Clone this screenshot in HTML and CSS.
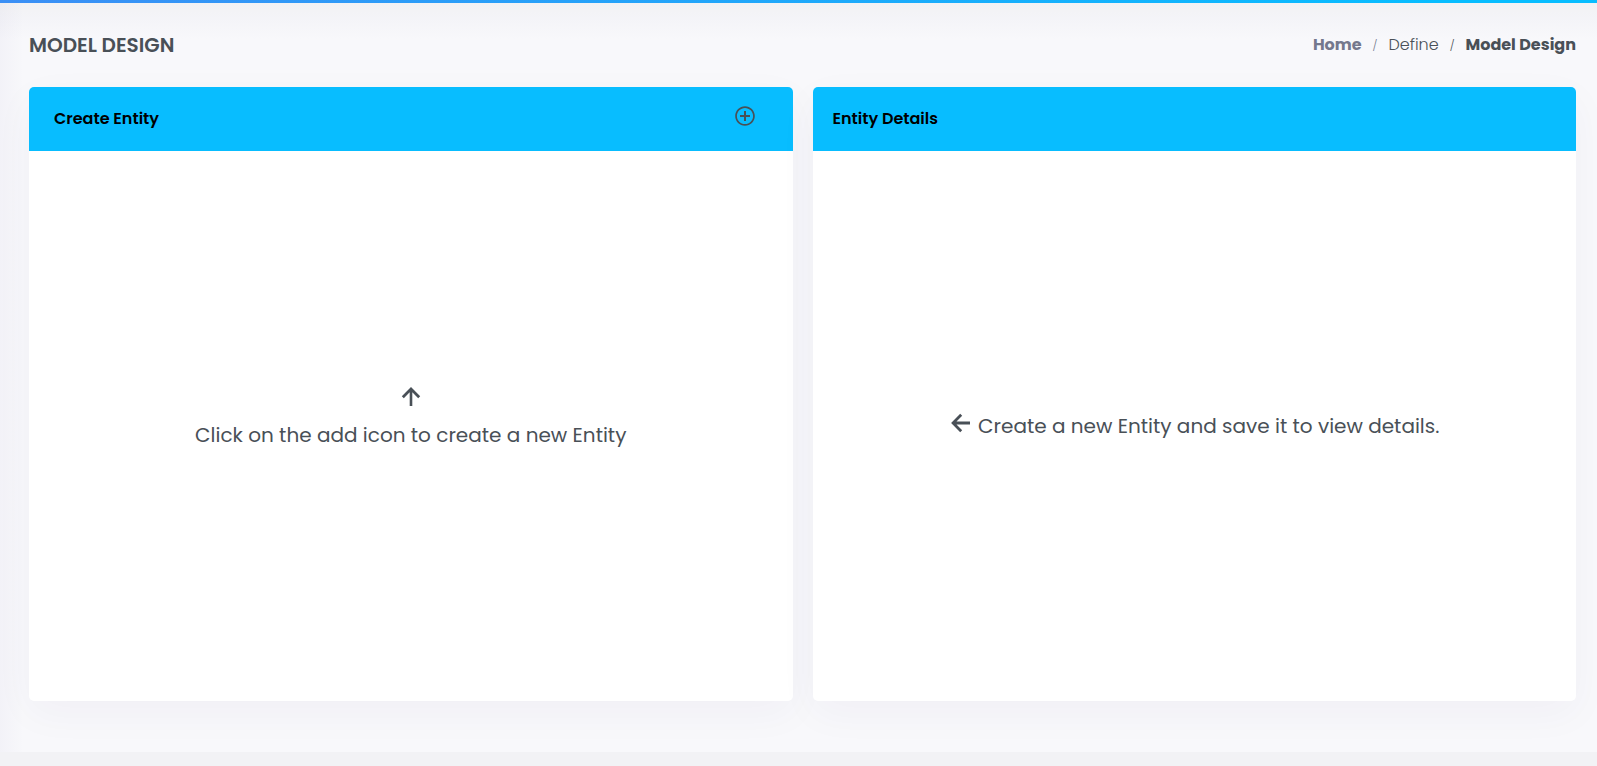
FILE: index.html
```html
<!DOCTYPE html>
<html lang="en">
<head>
<meta charset="utf-8">
<meta name="viewport" content="width=device-width, initial-scale=1">
<title>Model Design</title>
<link rel="stylesheet" href="styles.css">
</head>
<body>
<div class="topbar"></div>
<main class="content">
  <header class="page-head">
    <h1 class="page-title">MODEL DESIGN</h1>
    <nav class="breadcrumb" aria-label="Breadcrumb">
      <a class="crumb crumb-home" href="#">Home</a>
      <span class="separator">/</span>
      <a class="crumb" href="#">Define</a>
      <span class="separator separator-dark">/</span>
      <span class="crumb crumb-current">Model Design</span>
    </nav>
  </header>
  <div class="cards">
    <section class="card">
      <div class="card-head card-head-action">
        <h2 class="card-title">Create Entity</h2>
        <button class="add" type="button" aria-label="Add entity">
          <svg class="icon" viewBox="0 0 24 24"><path d="M13 7h-2v4H7v2h4v4h2v-4h4v-2h-4V7zm-1-4.800C6.600 2.200 2.200 6.600 2.200 12s4.400 9.800 9.800 9.800 9.800-4.400 9.800-9.800S17.400 2.200 12 2.200zm0 17.900c-4.500 0-8.100-3.600-8.100-8.100S7.500 3.900 12 3.900s8.100 3.600 8.100 8.100-3.600 8.100-8.100 8.100z"/></svg>
        </button>
      </div>
      <div class="card-body card-body-stacked">
        <svg class="icon" viewBox="0 0 24 24"><path d="M10.700 21V7.300l-5.900 5.900L2.800 11.200 12 2.100l9.200 9.100-2 2-5.900-5.900V21z"/></svg>
        <p class="hint">Click on the add icon to create a new Entity</p>
      </div>
    </section>
    <section class="card">
      <div class="card-head">
        <h2 class="card-title">Entity Details</h2>
      </div>
      <div class="card-body card-body-inline">
        <svg class="icon" viewBox="0 0 24 24"><path d="M21 10.500H7.500l5.700-5.700-2-2.100L2.100 12l9.100 9.300 2-2.100-5.700-5.700H21z"/></svg>
        <p class="hint">Create a new Entity and save it to view details.</p>
      </div>
    </section>
  </div>
</main>
<footer class="footer"></footer>
</body>
</html>
```
FILE: styles.css
```css
* { box-sizing: border-box; }
body {
  margin: 0;
  min-height: 100vh;
  display: flex;
  flex-direction: column;
  background: #f8f8fb;
  color: #495057;
  font-family: Poppins, Inter, "Open Sans", sans-serif;
  font-size: 16px;
  line-height: 24px;
}
.topbar {
  height: 3px;
  background: linear-gradient(to right, #3b8ff5, #08bdff 90%);
}
.content {
  flex: 1;
  display: flex;
  flex-direction: column;
  padding: 30px 21px 51px 29px;
  background:
    linear-gradient(to right, rgba(72, 60, 140, 0.03), transparent 24px),
    linear-gradient(to bottom, #f2f2f4, #f4f4f8 16px, #f8f8fb 36px);
}
.page-head {
  display: flex;
  align-items: center;
  justify-content: space-between;
  padding-bottom: 30px;
}
.page-title, .card-title, .hint { margin: 0; }
.page-title {
  font-size: 20px;
  font-weight: 600;
}
.breadcrumb {
  display: flex;
  align-items: center;
  gap: 11px;
}
.crumb {
  color: #495057;
  font-weight: 300;
  text-decoration: none;
}
.crumb-home {
  color: #74788d;
  font-weight: 700;
}
.crumb-current { font-weight: 700; }
.separator {
  color: #74788d;
  font-size: 11px;
  font-weight: 300;
}
.separator-dark { color: #495057; }
.cards {
  flex: 1;
  display: grid;
  grid-template-columns: 1fr 1fr;
  gap: 20px;
}
.card {
  display: flex;
  flex-direction: column;
  background: #fff;
  border-radius: 5px;
  box-shadow: 0 12px 40px rgba(40, 18, 90, 0.04);
}
.card-head {
  display: flex;
  align-items: center;
  height: 64px;
  padding: 0 20px;
  border-radius: 5px 5px 0 0;
  background: #08bdff;
}
.card-head-action {
  justify-content: space-between;
  padding: 0 36px 0 25px;
}
.card-title {
  color: #000;
  font-size: 16px;
  font-weight: 600;
}
.add {
  display: flex;
  padding: 0 0 6px;
  border: 0;
  background: none;
  color: #495057;
  cursor: pointer;
}
.icon {
  width: 24px;
  height: 24px;
  fill: currentColor;
}
.card-body {
  flex: 1;
  display: flex;
  align-items: center;
  justify-content: center;
}
.card-body-stacked {
  flex-direction: column;
  gap: 11px;
  padding-bottom: 18px;
}
.card-body-inline {
  gap: 5px;
}
.card-body-inline .icon { margin-bottom: 7px; }
.hint {
  font-size: 20px;
  font-weight: 400;
  line-height: 30px;
}
.footer {
  height: 14px;
  background: #f2f2f5;
}
```
